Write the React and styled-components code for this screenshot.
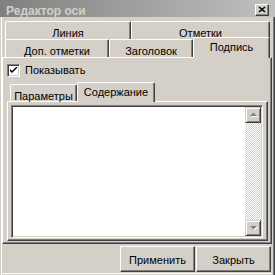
import styled, { createGlobalStyle } from "styled-components";

const FACE = "#d4d0c8";

const GlobalStyle = createGlobalStyle`
  html, body { margin: 0; padding: 0; background: ${FACE}; }
  body {
    font-family: "Liberation Sans", Arial, sans-serif;
    font-size: 11px;
    color: #000;
  }
`;

const Window = styled.div`
  width: 275px;
  height: 275px;
  background: ${FACE};
  display: flex;
  flex-direction: column;
  overflow: hidden;
`;

const TitleBar = styled.div`
  height: 17px;
  flex: none;
  display: flex;
  align-items: center;
  justify-content: space-between;
  padding: 1px 6px 0 6px;
  box-sizing: border-box;
  background: linear-gradient(to right, #808080, #c0c0c0);
`;

const Title = styled.span`
  font-weight: bold;
  font-size: 12px;
  color: ${FACE};
  padding-top: 3px;
`;

const CloseButton = styled.div`
  width: 14px;
  height: 12px;
  margin-top: 1px;
  box-sizing: border-box;
  background: ${FACE};
  border-top: 1px solid #fff;
  border-left: 1px solid #fff;
  border-right: 1px solid #404040;
  border-bottom: 1px solid #404040;
  box-shadow: inset -1px -1px #808080;
  display: flex;
  align-items: center;
  justify-content: center;
`;

const Body = styled.div`
  flex: 1;
  margin-left: 1px;
  border-left: 1px solid #fff;
  border-right: 1px solid #404040;
  box-shadow: inset -1px 0 #808080;
  padding: 4px 2px 0 0;
  display: flex;
  flex-direction: column;
`;

const TabStrip = styled.div`
  margin-left: 3px;
  display: flex;
  flex-direction: column;
`;

const TabRow = styled.div`
  display: flex;
  height: ${(p) => p.$h}px;
  align-items: flex-end;
`;

const Tab = styled.div`
  position: relative;
  width: ${(p) => p.$w}px;
  height: ${(p) => (p.$active ? p.$h + 3 : p.$h)}px;
  margin-top: ${(p) => (p.$active ? -2 : 0)}px;
  margin-bottom: ${(p) => (p.$active ? -1 : 0)}px;
  align-self: flex-start;
  z-index: ${(p) => (p.$active ? 2 : 1)};
  box-sizing: border-box;
  background: ${FACE};
  border-top: 1px solid #fff;
  border-left: 1px solid #fff;
  border-right: 1px solid #404040;
  border-radius: 2px 2px 0 0;
  box-shadow: inset -1px 0 #808080;
  display: flex;
  justify-content: center;
  padding-top: ${(p) => (p.$active ? 3 : 5)}px;
  line-height: 13px;
  white-space: nowrap;
`;

const Panel = styled.div`
  height: 187px;
  box-sizing: border-box;
  border-top: 1px solid #fff;
  border-left: 1px solid #fff;
  border-right: 1px solid #404040;
  border-bottom: 1px solid #404040;
  box-shadow: inset -1px -1px #808080;
  padding: 6px 3px 2px 4px;
  display: flex;
  flex-direction: column;
`;

const CheckRow = styled.label`
  display: flex;
  align-items: center;
  gap: 5px;
  height: 13px;
  line-height: 13px;
`;

const CheckBox = styled.span`
  width: 13px;
  height: 13px;
  box-sizing: border-box;
  background: #fff;
  border-top: 1px solid #808080;
  border-left: 1px solid #808080;
  border-right: 1px solid #fff;
  border-bottom: 1px solid #fff;
  box-shadow: inset 1px 1px #404040, inset -1px -1px ${FACE};
  display: flex;
  align-items: center;
  justify-content: center;
`;

const InnerStrip = styled.div`
  margin: 7px 0 0 3px;
  display: flex;
  height: 17px;
`;

const InnerPanel = styled.div`
  flex: 1;
  box-sizing: border-box;
  border-top: 1px solid #fff;
  border-left: 1px solid #fff;
  border-right: 1px solid #404040;
  border-bottom: 1px solid #404040;
  box-shadow: inset -1px -1px #808080;
  padding: 3px 4px 2px 3px;
  display: flex;
`;

const Edit = styled.div`
  flex: 1;
  display: flex;
  box-sizing: border-box;
  background: #fff;
  border-top: 1px solid #808080;
  border-left: 1px solid #808080;
  border-right: 1px solid #fff;
  border-bottom: 1px solid #fff;
  box-shadow: inset 1px 1px #404040, inset -1px -1px ${FACE};
  padding: 1px;
`;

const TextArea = styled.div`
  flex: 1;
`;

const ScrollBar = styled.div`
  width: 16px;
  display: flex;
  flex-direction: column;
  background-color: #fff;
  background-image: conic-gradient(
    ${FACE} 25%,
    #fff 0 50%,
    ${FACE} 0 75%,
    #fff 0
  );
  background-size: 2px 2px;
`;

const ScrollButton = styled.div`
  width: 16px;
  height: 16px;
  flex: none;
  box-sizing: border-box;
  background: ${FACE};
  border-top: 1px solid ${FACE};
  border-left: 1px solid ${FACE};
  border-right: 1px solid #404040;
  border-bottom: 1px solid #404040;
  box-shadow: inset 1px 1px #fff, inset -1px -1px #808080;
  display: flex;
  align-items: center;
  justify-content: center;
  margin-top: ${(p) => (p.$bottom ? "auto" : 0)};
`;

const Footer = styled.div`
  display: flex;
  justify-content: flex-end;
  gap: 1px;
  margin-top: 2px;
  padding-right: 1px;
  padding-bottom: 1px;
  border-bottom: 1px solid #fff;
`;

const Button = styled.div`
  width: 75px;
  height: 26px;
  box-sizing: border-box;
  background: ${FACE};
  border-top: 1px solid #fff;
  border-left: 1px solid #fff;
  border-right: 1px solid #404040;
  border-bottom: 1px solid #404040;
  box-shadow: inset -1px -1px #808080;
  display: flex;
  align-items: center;
  justify-content: center;
  padding-top: 1px;
`;

const Arrow = ({ down }) => (
  <svg width="9" height="6" viewBox="0 0 9 6">
    {down ? (
      <>
        <polygon points="2,2 9,2 5.5,5.5" fill="#fff" />
        <polygon points="1,1 8,1 4.5,4.5" fill="#808080" />
      </>
    ) : (
      <>
        <polygon points="2,5 9,5 5.5,1.5" fill="#fff" />
        <polygon points="1,4 8,4 4.5,0.5" fill="#808080" />
      </>
    )}
  </svg>
);

export default function App() {
  return (
    <>
      <GlobalStyle />
      <Window>
        <TitleBar>
          <Title>Редактор оси</Title>
          <CloseButton>
            <svg width="8" height="7" viewBox="0 0 8 7">
              <path d="M1 1 L7 6 M7 1 L1 6" stroke="#000" strokeWidth="1.6" />
            </svg>
          </CloseButton>
        </TitleBar>
        <Body>
          <TabStrip>
            <TabRow $h={18}>
              <Tab $w={126} $h={18}>Линия</Tab>
              <Tab $w={139} $h={18}>Отметки</Tab>
            </TabRow>
            <TabRow $h={18}>
              <Tab $w={104} $h={18}>Доп. отметки</Tab>
              <Tab $w={84} $h={18}>Заголовок</Tab>
              <Tab $w={77} $h={18} $active>Подпись</Tab>
            </TabRow>
          </TabStrip>
          <Panel>
            <CheckRow>
              <CheckBox>
                <svg width="7" height="7" viewBox="0 0 7 7">
                  <path d="M0 2 L0 4 L2 6 L7 1 L7 -1 L2 4 Z" fill="#000" />
                </svg>
              </CheckBox>
              Показывать
            </CheckRow>
            <InnerStrip>
              <Tab $w={67} $h={17}>Параметры</Tab>
              <Tab $w={78} $h={17} $active>Содержание</Tab>
            </InnerStrip>
            <InnerPanel>
              <Edit>
                <TextArea />
                <ScrollBar>
                  <ScrollButton>
                    <Arrow />
                  </ScrollButton>
                  <ScrollButton $bottom>
                    <Arrow down />
                  </ScrollButton>
                </ScrollBar>
              </Edit>
            </InnerPanel>
          </Panel>
          <Footer>
            <Button>Применить</Button>
            <Button>Закрыть</Button>
          </Footer>
        </Body>
      </Window>
    </>
  );
}
